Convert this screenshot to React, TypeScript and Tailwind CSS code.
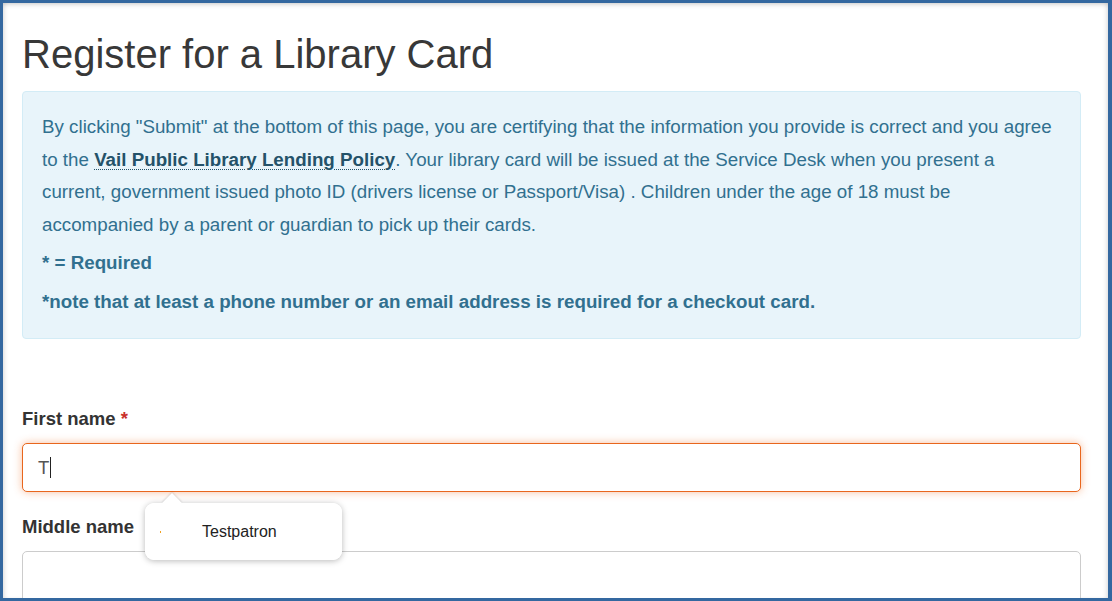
export default function App() {
  return (
    <div className="h-[601px] w-[1112px] overflow-hidden border-[3px] border-r-4 border-[#3468a0] bg-white font-['Liberation_Sans',Arial,sans-serif]">
      <div className="h-full pl-[19px] pr-[27px] shadow-[inset_0_4px_4px_-2px_rgba(0,0,0,0.15),inset_4px_0_4px_-2px_rgba(0,0,0,0.1),inset_-4px_0_4px_-2px_rgba(0,0,0,0.1)]">
        <h1 className="pt-[29px] text-[40px] leading-[44px] font-normal text-[#383838]">
          Register for a Library Card
        </h1>

        <div className="mt-[15px] rounded border border-[#d3ecf6] bg-[#e8f4fa] px-[19px] pt-[19px] pb-[20px] text-[18.75px] leading-[32.5px] text-[#31708f]">
          <p className="mb-[6px]">
            By clicking "Submit" at the bottom of this page, you are certifying
            that the information you provide is correct and you agree to the{" "}
            <a className="font-bold text-[#245269] underline decoration-dotted decoration-1 underline-offset-[3px]">
              Vail Public Library Lending Policy
            </a>
            . Your library card will be issued at the Service Desk when you
            present a current, government issued photo ID (drivers license or
            Passport/Visa) . Children under the age of 18 must be accompanied by
            a parent or guardian to pick up their cards.
          </p>
          <p className="mb-[6px] font-bold">* = Required</p>
          <p className="font-bold">
            *note that at least a phone number or an email address is required
            for a checkout card.
          </p>
        </div>

        <div className="pt-[67px]">
          <label className="block text-[18.5px] leading-[26px] font-bold text-[#333]">
            First name <span className="text-[#c9302c]">*</span>
          </label>
          <div className="mt-[11px] flex h-[49px] items-center rounded-[5px] border border-[#e8661d] bg-white px-[15px] text-[18.5px] text-[#555] shadow-[0_0_8px_rgba(240,110,40,0.45)]">
            <span>T</span>
            <span className="ml-[1px] h-[21px] w-px bg-[#222]" />
          </div>

          <div className="relative pt-[22px]">
            <label className="block text-[18.5px] leading-[26px] font-bold text-[#333]">
              Middle name
            </label>
            <div className="mt-[11px] h-[60px] rounded-[5px] border border-[#ccc] bg-white" />

            <div className="absolute top-[11px] left-[123px] h-[57px] w-[197px] rounded-[9px] bg-white shadow-[0_1px_6px_rgba(0,0,0,0.28)]">
              <div className="absolute -top-[7px] left-[20px] h-[14px] w-[14px] rotate-45 bg-white shadow-[-1px_-1px_2px_rgba(0,0,0,0.12)]" />
              <div className="relative z-10 flex h-full w-full items-center rounded-[9px] bg-white">
                <span className="ml-[15px] h-[2px] w-px bg-[#f0a020]" />
                <span className="ml-[41px] text-[16px] text-[#222]">Testpatron</span>
              </div>
            </div>
          </div>
        </div>
      </div>
    </div>
  );
}
